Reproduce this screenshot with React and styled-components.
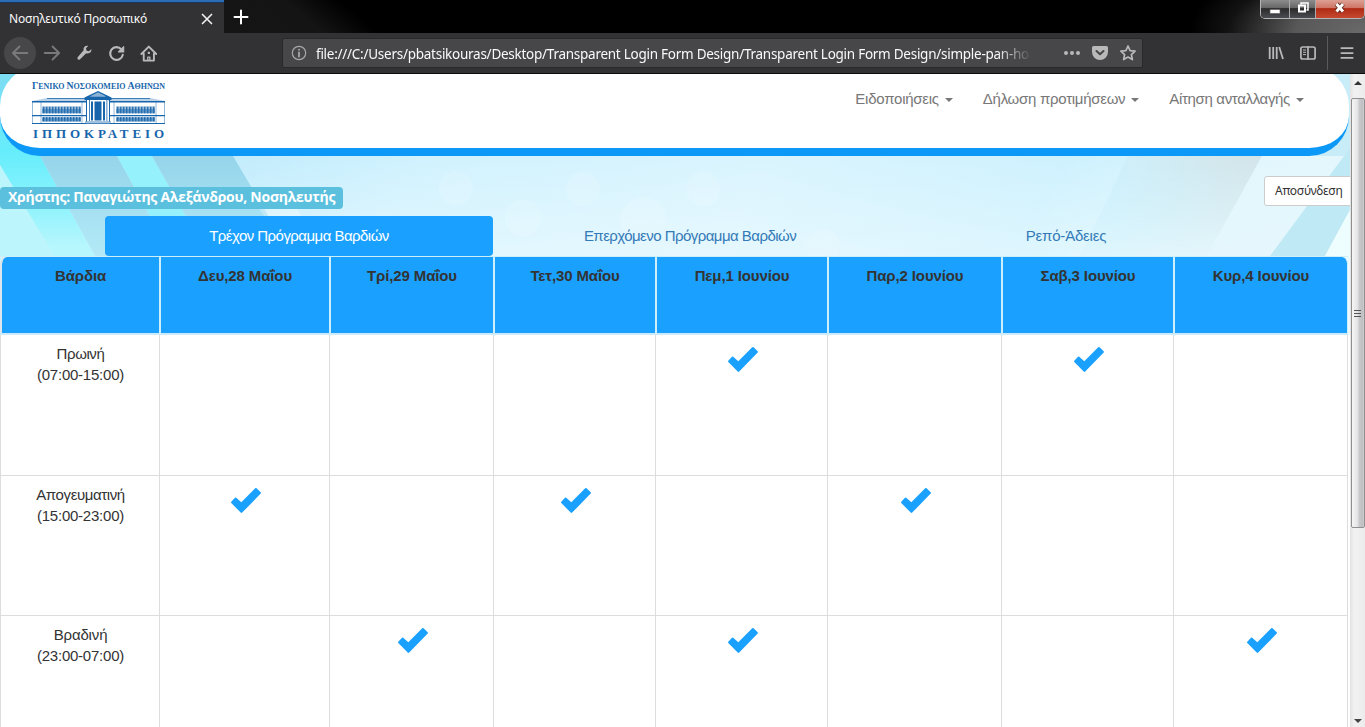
import React from 'react';
import styled, { createGlobalStyle } from 'styled-components';

const GlobalStyle = createGlobalStyle`
  * { box-sizing: border-box; }
  html, body { margin: 0; padding: 0; overflow: hidden; }
  body { font-family: "Liberation Sans", Arial, sans-serif; font-size: 15px; color: #333; background: #fff; }
`;

const Window = styled.div`
  width: 1365px;
  height: 727px;
  display: flex;
  flex-direction: column;
  overflow: hidden;
`;

const TitleBar = styled.header`
  height: 33px;
  flex: none;
  display: flex;
  justify-content: space-between;
  background:
    radial-gradient(ellipse 175px 80px at 1365px 33px, #6a6a6a 0%, #585858 40%, rgba(30, 30, 30, 0.6) 78%, transparent 100%),
    linear-gradient(40deg, #161616 0%, #141414 23%, #000 27%, #000 100%);
`;

const TabStrip = styled.div`
  display: flex;
`;

const BrowserTab = styled.div`
  width: 224px;
  height: 33px;
  padding: 2px 11px 0 9px;
  display: flex;
  align-items: center;
  justify-content: space-between;
  background: #323234;
  border-top: 2px solid #2b6cb5;
  box-shadow: inset 0 1px 0 #16365c;
  color: #f9f9fa;
  font: 12px "Noto Sans", "Open Sans", sans-serif;
  letter-spacing: -0.18px;
`;

const NewTab = styled.div`
  width: 34px;
  display: flex;
  align-items: center;
  justify-content: center;
`;

const Controls = styled.div`
  display: flex;
  width: 105px;
  height: 19px;
  border: 1px solid #b5b5b5;
  border-top: 0;
  border-radius: 0 0 5px 5px;
  overflow: hidden;
`;

const Control = styled.div`
  width: ${(p) => p.$width}px;
  display: flex;
  align-items: center;
  justify-content: center;
  border-left: ${(p) => (p.$first ? 0 : '1px solid #aaa')};
  background: ${(p) =>
    p.$close
      ? 'linear-gradient(#dda095 0%, #cf7767 42%, #b02a14 48%, #c44a30 100%)'
      : 'linear-gradient(#8d8d8d 0%, #686868 42%, #2b2b2b 48%, #4a4d52 100%)'};
`;

const Toolbar = styled.div`
  height: 41px;
  flex: none;
  display: flex;
  align-items: center;
  background: #323234;
  border-bottom: 1px solid #0c0c0d;
`;

const NavButtons = styled.div`
  width: 282px;
  padding-left: 4px;
  display: flex;
  align-items: center;
`;

const NavButton = styled.div`
  width: 32px;
  height: 32px;
  display: flex;
  align-items: center;
  justify-content: center;
  border-radius: 50%;
  background: ${(p) => (p.$round ? '#474749' : 'transparent')};
`;

const UrlBar = styled.div`
  width: 861px;
  height: 30px;
  padding: 0 6px 0 8px;
  display: flex;
  align-items: center;
  background: #474749;
  border: 1px solid #29292b;
  border-radius: 2px;
`;

const UrlText = styled.div`
  width: 716px;
  margin-left: 9px;
  padding-top: 2px;
  overflow: hidden;
  white-space: nowrap;
  color: #f9f9fa;
  font: 13.5px/24px "Noto Sans", "Open Sans", sans-serif;
  letter-spacing: -0.26px;
  mask-image: linear-gradient(to right, #000 95%, transparent 100%);
`;

const UrlActions = styled.div`
  margin-left: auto;
  display: flex;
  align-items: center;
  gap: 12px;
`;

const ToolActions = styled.div`
  flex: 1;
  display: flex;
  align-items: center;
  justify-content: flex-end;
  padding-right: 11px;
`;

const ToolPair = styled.div`
  display: flex;
  gap: 16px;
`;

const ToolDivider = styled.div`
  width: 1px;
  height: 34px;
  margin: 0 12px 0 11px;
  background: #5b5b5d;
`;

const Viewport = styled.div`
  flex: 1;
  display: flex;
  min-height: 0;
`;

const Page = styled.main`
  position: relative;
  width: 1350px;
  overflow: hidden;
  isolation: isolate;
`;

const Backdrop = styled.svg`
  position: absolute;
  inset: 0;
  z-index: -1;
  display: block;
`;

const SiteHeader = styled.div`
  height: 90px;
  width: 1349px;
  margin-top: -8px;
  padding: 15px 45px 0 30px;
  display: flex;
  justify-content: space-between;
  background: #fff;
  border-bottom: 8px solid #0c98f6;
  border-radius: 40px;
`;

const Menu = styled.nav`
  display: flex;
  gap: 30px;
  padding-top: 7px;
`;

const MenuItem = styled.div`
  display: flex;
  align-items: center;
  height: 21px;
  color: #777;
  white-space: nowrap;
  letter-spacing: ${(p) => p.$track || 0}px;

  &::after {
    content: '';
    margin-top: 2px;
    margin-left: 6px;
    border: 4px solid transparent;
    border-top-color: #777;
    border-bottom: 0;
  }
`;

const UserRow = styled.div`
  height: 60px;
  display: flex;
  justify-content: space-between;
`;

const UserLabel = styled.div`
  width: 343px;
  height: 22px;
  margin-top: 31px;
  padding-left: 8px;
  background: #5bc0de;
  border-radius: 4px;
  color: #fff;
  font: bold 14px/20px "Open Sans", "Noto Sans", sans-serif;
  letter-spacing: -0.26px;
  white-space: nowrap;
`;

const LogoutButton = styled.button`
  width: 100px;
  height: 30px;
  margin: 20px -14px 0 0;
  padding: 0 0 2px 10px;
  text-align: left;
  background: #fff;
  border: 1px solid #ccc;
  border-radius: 3px;
  color: #333;
  font: 12px "Noto Sans", "Open Sans", sans-serif;
  letter-spacing: -0.28px;
`;

const Tabs = styled.div`
  display: flex;
  height: 40px;
  margin-left: 105px;
`;

const Tab = styled.div`
  width: ${(p) => p.$width}px;
  line-height: 39px;
  text-align: center;
  border-radius: 4px;
  color: ${(p) => (p.$active ? '#fff' : '#337ab7')};
  background: ${(p) => (p.$active ? '#1aa1ff' : 'transparent')};
  letter-spacing: ${(p) => p.$track || 0}px;
`;

const columns = '159px 170px 164px 162px 172px 174px 172px 175px';

const HeadRow = styled.div`
  display: grid;
  grid-template-columns: ${columns};
  width: 1348px;
  height: 79px;
  border-top: 1px solid #cdeefb;
  border-bottom: 2px solid #cdeafb;
  overflow: hidden;
`;

const HeadCell = styled.div`
  padding-top: 8px;
  border-left: 2px solid #cdeefb;
  text-align: center;
  font-weight: bold;
  line-height: 21px;
  background: #1aa1ff;
  background-clip: padding-box;
  letter-spacing: -0.12px;

  &:first-child { border-radius: 7px 0 0 0; border-left-color: #dde6ea; }
  &:last-child { border-radius: 0 6px 0 0; border-right: 1px solid #cdeefb; }
`;

const BodyRow = styled.div`
  display: grid;
  grid-template-columns: ${columns};
  width: 1348px;
  height: ${(p) => p.$height}px;
  background: #fff;
  border-bottom: 1px solid #ddd;
`;

const BodyCell = styled.div`
  padding-top: 8px;
  border-left: 1px solid #ddd;
  text-align: center;
  line-height: 21px;

  &:last-child { border-right: 1px solid #ddd; }
`;

const ShiftLine = styled.div`
  letter-spacing: ${(p) => p.$track}px;
  padding-left: 1px;
`;

const TableBody = styled.div`
  background: #fff;
`;

const Tick = styled.svg`
  display: block;
  margin: 3px auto 0;
  position: relative;
  left: 1px;
`;

const ScrollBar = styled.div`
  width: 15px;
  display: flex;
  flex-direction: column;
  align-items: center;
  background: linear-gradient(to right, #e3e3e3, #f1f1f1 30%, #ececec);
`;

const ScrollThumb = styled.div`
  width: 14px;
  height: 430px;
  display: flex;
  align-items: center;
  justify-content: center;
  border: 1px solid #8f8f8f;
  border-radius: 2px;
  background: linear-gradient(to right, #f6f6f6, #e4e4e6 45%, #c9c9ce 60%, #bdbdc2 90%, #d4d4d6);
`;

const ScrollArrow = styled.div`
  height: ${(p) => p.$height}px;
  display: flex;
  align-items: ${(p) => (p.$down ? 'flex-end' : 'flex-start')};
  padding: ${(p) => (p.$down ? '0 0 4px' : '7px 0 0')};
  margin-top: ${(p) => (p.$down ? 'auto' : 0)};
`;

const Icon = ({ size = 16, children, color = '#b9b9ba', width = 2 }) => (
  <svg width={size} height={size} viewBox="0 0 16 16" fill="none" stroke={color} strokeWidth={width} strokeLinecap="round" strokeLinejoin="round">
    {children}
  </svg>
);

const wing = Array.from({ length: 13 }, (_, i) => i);

function Logo() {
  const c = '#1765ab';
  return (
    <svg width="138" height="60" viewBox="0 0 138 60" fill={c}>
      <g fontFamily="Liberation Serif, serif" fontWeight="bold">
        <text x="2" y="8" fontSize="10" textLength="133" lengthAdjust="spacingAndGlyphs">
          Γ<tspan fontSize="8.2">ΕΝΙΚΟ </tspan>Ν<tspan fontSize="8.2">ΟΣΟΚΟΜΕΙΟ </tspan>Α<tspan fontSize="8.2">ΘΗΝΩΝ</tspan>
        </text>
        <text x="3" y="57" fontSize="13" textLength="131">ΙΠΠΟΚΡΑΤΕΙΟ</text>
      </g>
      <path d="M2 20h54v1.500H2zM79 20h56v1.500H79zM17 17h40v.800H17zM78 17h42v.800H78z" />
      <path d="M2 20l15-3h40v3zM78 17h42l15 3H78z" opacity=".3" />
      <path d="M54.500 16.500L68 10l13.500 6.500V19h-27zM60 15.500h16L68 11.600z" fillRule="evenodd" />
      <path d="M60 15.500h16L68 11.600z" opacity=".5" />
      <path d="M2.500 21v21M134.500 21v21M11 21v21M126 21v21M52 21v21M84 21v21" stroke={c} strokeWidth="1" opacity=".45" />
      {wing.map((i) => (
        <path key={i} opacity=".9" d={`M${12.5 + i * 3} 25.500h2.200v7h-2.200zM${12.5 + i * 3} 36h2.200v4.500h-2.200zM${86.5 + i * 3} 25.500h2.200v7h-2.200zM${86.500 + i * 3} 36h2.200v4.500h-2.200z`} />
      ))}
      <path d="M12 28h39v4H12zM86 28h39v4H86zM12 37h39v3.500H12zM86 37h39v3.500H86z" opacity=".4" />
      <path d="M2 34h54v1.300H2zM80 34h55v1.300H80zM2 42h54v.900H2zM80 42h55v.900H80z" />
      <path d="M56 19h1v21.500h-1zM59 19h.800v21H59zM61 20.500h2v19h-2zM64.500 20.500h7v19h-7zM73 20.500h2v19h-2zM76.500 19h.800v21h-.800zM79 19h1v21.500h-1z" />
      <path d="M55 40.500h26v.900H55zM53 42h30v1H53z" opacity=".8" />
    </svg>
  );
}

function Background() {
  return (
    <Backdrop width="1350" height="262" viewBox="0 74 1350 262" preserveAspectRatio="none">
      <defs>
        <linearGradient id="base" x1="0" x2="1" y1="0" y2="0.12">
          <stop offset="0" stopColor="#b2eff8" />
          <stop offset="0.17" stopColor="#bdeafc" />
          <stop offset="0.35" stopColor="#d0f2fe" />
          <stop offset="0.6" stopColor="#d9f4fe" />
          <stop offset="0.82" stopColor="#cdf1fe" />
          <stop offset="1" stopColor="#e0f7fc" />
        </linearGradient>
        <linearGradient id="lift" x1="0" x2="0" y1="0" y2="1">
          <stop offset="0.3" stopColor="#fff" stopOpacity="0" />
          <stop offset="0.72" stopColor="#fff" stopOpacity="0.38" />
        </linearGradient>
        <linearGradient id="cyan" gradientUnits="userSpaceOnUse" x1="0" y1="74" x2="0" y2="245">
          <stop offset="0" stopColor="#7cdcf2" />
          <stop offset="0.45" stopColor="#66edfc" />
          <stop offset="0.75" stopColor="#8bf3fd" />
          <stop offset="1" stopColor="#b6f6fd" />
        </linearGradient>
        <linearGradient id="slate" gradientUnits="userSpaceOnUse" x1="0" y1="150" x2="0" y2="256">
          <stop offset="0" stopColor="#93d3ea" />
          <stop offset="1" stopColor="#b4eaf7" />
        </linearGradient>
        <linearGradient id="grey" gradientUnits="userSpaceOnUse" x1="1110" y1="200" x2="1240" y2="170">
          <stop offset="0" stopColor="#cdf0fc" />
          <stop offset="1" stopColor="#d3e5ea" />
        </linearGradient>
        <linearGradient id="greyFade" gradientUnits="userSpaceOnUse" x1="0" y1="156" x2="0" y2="256">
          <stop offset="0" stopColor="#fff" />
          <stop offset="1" stopColor="#fff" stopOpacity="0.15" />
        </linearGradient>
        <mask id="fade"><rect x="1000" y="74" width="350" height="262" fill="url(#greyFade)" /></mask>
      </defs>
      <rect y="74" width="1350" height="262" fill="url(#base)" />
      <rect y="74" width="1350" height="262" fill="url(#lift)" />
      <path d="M0 74V165L54 256H95L40 156L-5 74z" fill="url(#cyan)" />
      <path d="M0 74H30L50 156H40L0 156z" fill="url(#cyan)" />
      <path d="M0 165L54 256H0z" fill="#bdf5fc" />
      <path d="M40 156H117L172 256H95z" fill="url(#slate)" />
      <path d="M117 156H152L208 256H172z" fill="#95f1fb" />
      <path d="M152 156H233L292 256H208z" fill="url(#slate)" />
      <path d="M250 195L285 188L325 256H291z" fill="#fff" opacity=".3" />
      <g fill="#fff" opacity=".13">
        <circle cx="583" cy="189" r="17" />
        <circle cx="523" cy="218" r="18" />
        <circle cx="643" cy="220" r="23" />
        <circle cx="703" cy="189" r="17" />
        <circle cx="456" cy="188" r="17" />
        <circle cx="823" cy="247" r="17" />
      </g>
      <path d="M1128 156H1262L1207 256H1080z" fill="url(#grey)" mask="url(#fade)" />
      <path d="M1262 156H1344L1270 256H1207z" fill="#e4f6fd" opacity=".8" />
      <path d="M1300 74H1350V150L1344 156H1300z" fill="#c8ecf8" />
      <path d="M1350 148L1270 256H1325L1350 210z" fill="#bfe9f5" />
      <path d="M1350 210L1325 256H1350z" fill="#eefdfd" />
    </Backdrop>
  );
}

const Check = () => (
  <Tick width="32" height="27" viewBox="0 0 32 27">
    <path d="M1.300 14.700L5 10.800Q5.600 10.200 6.200 10.800L11.300 15.300L25.200 1.300Q25.900 .700 26.600 1.300L30.700 5.300Q31.300 5.900 30.700 6.600L12.200 25.600Q11.400 26.300 10.700 25.600L1.300 16.100Q.700 15.400 1.300 14.700z" fill="#1aa1ff" />
  </Tick>
);

const days = ['Δευ,28 Μαΐου', 'Τρί,29 Μαΐου', 'Τετ,30 Μαΐου', 'Πεμ,1 Ιουνίου', 'Παρ,2 Ιουνίου', 'Σαβ,3 Ιουνίου', 'Κυρ,4 Ιουνίου'];
const shifts = [
  { name: 'Πρωινή', hours: '(07:00-15:00)', on: [3, 5], height: 141, track: -0.4 },
  { name: 'Απογευματινή', hours: '(15:00-23:00)', on: [0, 2, 4], height: 140, track: -0.4 },
  { name: 'Βραδινή', hours: '(23:00-07:00)', on: [1, 3, 6], height: 141, track: -0.15 },
];

export default function App() {
  return (
    <Window>
      <GlobalStyle />
      <TitleBar>
        <TabStrip>
          <BrowserTab>
            Νοσηλευτικό Προσωπικό
            <Icon size={12} color="#f0f0f0" width={2.2}><path d="M2 2l12 12M14 2L2 14" /></Icon>
          </BrowserTab>
          <NewTab>
            <Icon size={16} color="#fff" width={2}><path d="M8 1.500v13M1.500 8h13" /></Icon>
          </NewTab>
        </TabStrip>
        <Controls>
          <Control $width={28} $first>
            <svg width="12" height="16"><rect x="1" y="8.500" width="10" height="4" fill="#fff" stroke="#555" strokeWidth=".6" /></svg>
          </Control>
          <Control $width={27}>
            <svg width="12" height="14" fill="none" stroke="#fff" strokeWidth="1.500"><path d="M4 2.500V1h7v7H9.500" /><rect x="2" y="3.500" width="6" height="6" strokeWidth="2" /></svg>
          </Control>
          <Control $width={49} $close>
            <svg width="14" height="14"><path d="M3.500 2l6.500 7.500M10 2L3.500 9.500" stroke="#54221a" strokeWidth="4.600" /><path d="M3.500 2l6.500 7.500M10 2L3.500 9.500" stroke="#fff" strokeWidth="3" /></svg>
          </Control>
        </Controls>
      </TitleBar>
      <Toolbar>
        <NavButtons>
          <NavButton $round><Icon color="#79797b" size={18} width={1.7}><path d="M14.500 8H1.800M7.500 2.200L1.700 8l5.800 5.800" /></Icon></NavButton>
          <NavButton><Icon color="#79797b" size={18} width={1.7}><path d="M1.500 8h12.700M8.500 2.200L14.300 8l-5.800 5.800" /></Icon></NavButton>
          <NavButton>
            <Icon width={0}><path fill="#b9b9ba" d="M15.300 4.300L12.900 6.200 10.600 5.700 10 3.300 12.100 1C9.400 .300 7.100 2.300 7.600 5.200L1.700 12.300C.700 13.800 2.400 15.500 3.800 14.400L10.200 8.200C13.200 9 16 7 15.300 4.300z" /></Icon>
          </NavButton>
          <NavButton>
            <Icon size={17} width={2}><path d="M13.900 9.300A6 6 0 1 1 12.600 4.100" /><path d="M14.800 1.500v5h-5z" fill="#b9b9ba" strokeWidth="1" /></Icon>
          </NavButton>
          <NavButton>
            <Icon size={17} width={1.8}><path d="M1.300 8.500L8.300 1.500l7 7M3.500 8v6.700h9.600V8" /><path d="M7.300 11.500h2v3h-2zM7.800 7h1v.800h-1z" strokeWidth="1.200" /></Icon>
          </NavButton>
        </NavButtons>
        <UrlBar>
          <Icon color="#a9a9aa" width={1.2}><circle cx="8" cy="8" r="6.700" /><path d="M8 7.500v4M8 4.600v.200" strokeWidth="1.800" /></Icon>
          <UrlText>file:///C:/Users/pbatsikouras/Desktop/Transparent Login Form Design/Transparent Login Form Design/simple-pan-ho</UrlText>
          <UrlActions>
            <Icon width={0}><g fill="#b9b9ba"><circle cx="2" cy="8" r="2" /><circle cx="8" cy="8" r="2" /><circle cx="14" cy="8" r="2" /></g></Icon>
            <Icon width={0}><path fill="#b9b9ba" d="M1.500 1h13Q16 1 16 2.500V7A8 8 0 0 1 0 7V2.500Q0 1 1.500 1z" /><path d="M4.500 6L8 9.300 11.500 6" stroke="#474749" strokeWidth="2" /></Icon>
            <Icon width={1.7}><path d="M8 1l2.100 4.600 5 .600-3.700 3.400 1 5L8 12l-4.400 2.600 1-5L.900 6.200l5-.600z" /></Icon>
          </UrlActions>
        </UrlBar>
        <ToolActions>
          <ToolPair>
            <Icon width={1.8}><path d="M1.700 2v12M5.200 2v12M8.700 2v12M11.200 2l3.800 12" strokeLinecap="butt" /></Icon>
            <Icon width={1.7}><rect x=".9" y="2" width="14.200" height="12" rx="1.800" /><path d="M8 2v12" /><path d="M3 5h3M3 7.300h3M3 9.600h3" strokeWidth="1" strokeLinecap="butt" /></Icon>
          </ToolPair>
          <ToolDivider />
          <Icon size={14} width={2}><path d="M1.500 2.300h13M1.500 8h13M1.500 13.700h13" /></Icon>
        </ToolActions>
      </Toolbar>
      <Viewport>
        <Page>
          <Background />
          <SiteHeader>
            <Logo />
            <Menu>
              <MenuItem $track={-0.25}>Ειδοποιήσεις</MenuItem>
              <MenuItem $track={-0.28}>Δήλωση προτιμήσεων</MenuItem>
              <MenuItem $track={-0.34}>Αίτηση ανταλλαγής</MenuItem>
            </Menu>
          </SiteHeader>
          <UserRow>
            <UserLabel>Χρήστης: Παναγιώτης Αλεξάνδρου, Νοσηλευτής</UserLabel>
            <LogoutButton>Αποσύνδεση</LogoutButton>
          </UserRow>
          <Tabs>
            <Tab $active $width={388} $track={-0.54}>Τρέχον Πρόγραμμα Βαρδιών</Tab>
            <Tab $width={394} $track={-0.54}>Επερχόμενο Πρόγραμμα Βαρδιών</Tab>
            <Tab $width={358} $track={-0.2}>Ρεπό-Άδειες</Tab>
          </Tabs>
          <HeadRow>
            <HeadCell>Βάρδια</HeadCell>
            {days.map((d) => <HeadCell key={d}>{d}</HeadCell>)}
          </HeadRow>
          <TableBody>
            {shifts.map((s) => (
              <BodyRow key={s.name} $height={s.height}>
                <BodyCell>
                  <ShiftLine $track={s.track}>{s.name}</ShiftLine>
                  <ShiftLine $track={-0.23}>{s.hours}</ShiftLine>
                </BodyCell>
                {days.map((d, i) => <BodyCell key={d}>{s.on.includes(i) && <Check />}</BodyCell>)}
              </BodyRow>
            ))}
          </TableBody>
        </Page>
        <ScrollBar>
          <ScrollArrow $height={24}><svg width="8" height="4"><path d="M4 0l4 4H0z" fill="#333" /></svg></ScrollArrow>
          <ScrollThumb>
            <svg width="8" height="9"><path d="M0 1.500h7M0 4.500h7M0 7.500h7" stroke="#555" /></svg>
          </ScrollThumb>
          <ScrollArrow $down $height={16}><svg width="8" height="4"><path d="M0 0h8L4 4z" fill="#444" /></svg></ScrollArrow>
        </ScrollBar>
      </Viewport>
    </Window>
  );
}
